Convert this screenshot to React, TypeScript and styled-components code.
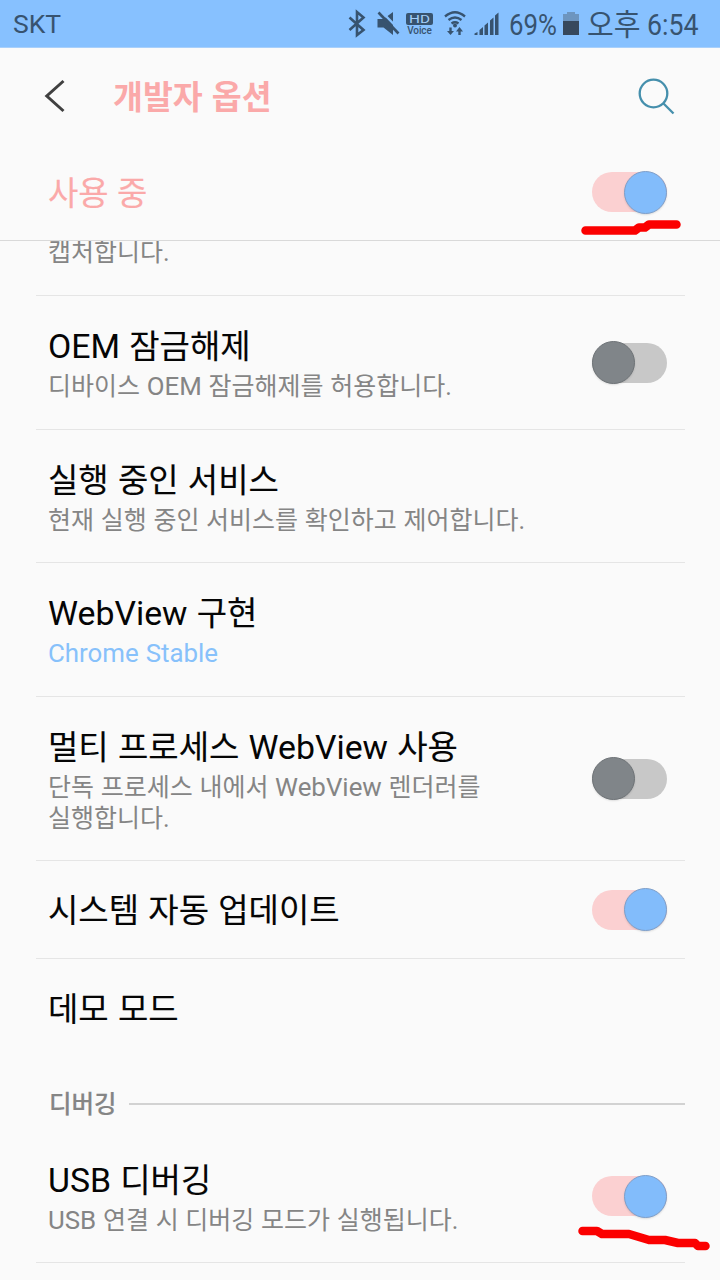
import React from 'react';
import styled, { createGlobalStyle } from 'styled-components';

const GlobalStyle = createGlobalStyle`
  * { box-sizing: border-box; }
  body {
    margin: 0;
    background: #fafafa;
    font-family: Roboto, "Noto Sans CJK KR", sans-serif;
    overflow: hidden;
  }
`;

const Screen = styled.div`
  position: relative;
  width: 720px;
  height: 1280px;
  overflow: hidden;
  background: #fafafa;
  display: flex;
  flex-direction: column;
  white-space: nowrap;
`;

const StatusBar = styled.header`
  height: 48px;
  flex: none;
  display: flex;
  align-items: center;
  padding: 0 13px 0 13px;
  background: #87c1ff;
  color: #37536f;
  border-bottom: 1px solid #a9d0fb;
`;

const Carrier = styled.span`
  flex: 1;
  font-size: 26.500px;
  line-height: 46px;
`;

const StatusIcons = styled.div`
  display: flex;
  align-items: center;
  height: 48px;
`;

const StatusText = styled.span<{ $width: number; $scale: number }>`
  width: ${(p) => p.$width}px;
  padding-top: 2px;
  font-size: 30px;
  line-height: 48px;
  transform: scaleX(${(p) => p.$scale});
  transform-origin: left center;
`;

const AppBar = styled.div`
  height: 96px;
  flex: none;
  display: flex;
  align-items: center;
  padding: 0 45px 0 44px;
`;

const PageTitle = styled.h1`
  flex: 1;
  margin: 4px 0 0 47px;
  font-size: 32.500px;
  line-height: 48px;
  font-weight: 700;
  word-spacing: 1px;
  color: #faa9a9;
`;

const MasterRow = styled.div`
  height: 97px;
  flex: none;
  display: flex;
  align-items: center;
  justify-content: space-between;
  padding: 0 53px 0 48px;
  border-bottom: 1px solid #d9d9d9;
`;

const MasterLabel = styled.span`
  margin-top: 4px;
  font-size: 33px;
  line-height: 48px;
  color: #faa9a9;
  -webkit-text-stroke: 0.15px currentColor;
`;

const List = styled.main`
  flex: 1;
  min-height: 0;
  overflow: hidden;
  padding: 0 35px 0 36px;
`;

const Row = styled.section<{ $height: number; $last?: boolean }>`
  height: ${(p) => p.$height}px;
  display: flex;
  align-items: center;
  justify-content: space-between;
  padding: 0 18px 0 12px;
  border-bottom: ${(p) => (p.$last ? 'none' : '1px solid #e5e5e5')};
`;

const RowText = styled.div`
  display: flex;
  flex-direction: column;
  gap: 2px;
  padding-top: 2px;
`;

const Latin = styled.span`
  font-size: 1.035em;
  line-height: 1;
  -webkit-text-stroke: 0;
`;

const RowTitle = styled.div`
  font-size: 33px;
  line-height: 44px;
  height: 44px;
  word-spacing: 1px;
  color: #050505;
  -webkit-text-stroke: 0.12px currentColor;
  ${Latin} { font-size: 1.025em; }
`;

const Summary = styled.div<{ $accent?: boolean }>`
  font-size: 25px;
  line-height: 31px;
  word-spacing: 0.5px;
  color: ${(p) => (p.$accent ? '#87c1fb' : '#858585')};
  white-space: pre-line;
`;

const ClippedRow = styled(Row)`
  align-items: flex-start;
  & > div { margin-top: -4px; }
`;

const Track = styled.span<{ $on: boolean }>`
  flex: none;
  width: 75px;
  height: 40px;
  border-radius: 20px;
  display: flex;
  align-items: center;
  justify-content: ${(p) => (p.$on ? 'flex-end' : 'flex-start')};
  background: ${(p) => (p.$on ? '#fbd0d1' : '#c8c8c8')};
`;

const Thumb = styled.span<{ $on: boolean }>`
  flex: none;
  width: 43px;
  height: 43px;
  border-radius: 50%;
  background: ${(p) => (p.$on ? '#82bcfb' : '#808589')};
  border: 1px solid ${(p) => (p.$on ? '#7f9fc9' : '#6e7377')};
  box-shadow: 0 1px 2px rgba(0, 0, 0, 0.12);
`;

const Category = styled.div`
  height: 72px;
  display: flex;
  align-items: center;
  gap: 12px;
  padding: 19px 0 0 13px;
  font-size: 24.500px;
  line-height: 32px;
  font-weight: 500;
  color: #858585;
  -webkit-text-stroke: 0.15px currentColor;
  &::after {
    content: '';
    flex: 1;
    height: 2px;
    background: #d2d2d2;
  }
`;

const CategoryLabel = styled.span`
  padding-top: 2px;
`;

const Scribble = styled.svg<{ $x: number; $y: number }>`
  position: absolute;
  left: ${(p) => p.$x}px;
  top: ${(p) => p.$y}px;
`;

const Toggle = ({ on }: { on: boolean }) => (
  <Track $on={on}><Thumb $on={on} /></Track>
);

/* Latin words are set slightly larger than the Hangul around them. */
const Mixed = ({ text }: { text: string }) => (
  <>
    {text.split(/([A-Za-z]+(?: [A-Za-z]+)*)/).map((part, i) =>
      i % 2 ? <Latin key={i}>{part}</Latin> : part,
    )}
  </>
);

const SystemIcons = () => (
  <svg width="169" height="48" viewBox="340 0 169 48" fill="none" stroke="#37536f">
    <path d="M349.500 17.500L363.500 30L357 35V12L363.500 17.500L349.500 30" strokeWidth="2.6" />
    <g fill="#37536f" stroke="none">
      <path d="M377.500 19h6l9.500-7v23l-9.500-7.500h-6z" />
      <rect x="406" y="13" width="27" height="12" rx="2" />
      <path d="M474.500 35v-1.500l3-1.500v3zM479.500 35v-5l3.500-3v8zM484.500 35v-9.500l3.500-3v12.500zM490 35v-14.500l3.500-3v17.500zM495 35v-19.500l3.500-3v22.500z" />
      <circle cx="455" cy="25.500" r="2" />
      <path d="M450.500 28l3.500 4h-2.300v3.500h-2.400v-3.500h-2.300z" transform="matrix(1 0 0 -1 0 63)" />
      <path d="M459.500 27l3.500 4.500h-2.300v3.500h-2.400v-3.500h-2.300z" />
    </g>
    <path d="M380.500 10.500L401 31.500" stroke="#87c1ff" strokeWidth="2.500" />
    <path d="M378.500 12.500L398.500 33.500" strokeWidth="2.600" />
    <path d="M445 16.500Q455 8 465 16.500M448.500 20Q455 15 461.500 20M451.500 23.500Q455 21 458.500 23.500" strokeWidth="2.300" />
    <text x="419.500" y="23.200" textAnchor="middle" fontSize="11.500" textLength="21" lengthAdjust="spacingAndGlyphs" fill="#a4cef8" stroke="none">HD</text>
    <text x="419.500" y="34" textAnchor="middle" fontSize="10" textLength="24.500" fontWeight="500" fill="#37536f" stroke="none">Voice</text>
  </svg>
);

const Battery = () => (
  <svg width="24" height="48" viewBox="0 0 24 48">
    <path d="M0 14h4v-2h8v2h4v8H0z" fill="#6d95bf" />
    <path d="M0 21h16v14H0z" fill="#37485c" />
  </svg>
);

interface Setting {
  title: string;
  summary?: string;
  accent?: boolean;
  on?: boolean;
  height: number;
  last?: boolean;
}

const settings: Setting[] = [
  { title: 'OEM 잠금해제', summary: '디바이스 OEM 잠금해제를 허용합니다.', on: false, height: 134 },
  { title: '실행 중인 서비스', summary: '현재 실행 중인 서비스를 확인하고 제어합니다.', height: 133 },
  { title: 'WebView 구현', summary: 'Chrome Stable', accent: true, height: 134 },
  { title: '멀티 프로세스 WebView 사용', summary: '단독 프로세스 내에서 WebView 렌더러를\n실행합니다.', on: false, height: 164 },
  { title: '시스템 자동 업데이트', on: true, height: 98 },
  { title: '데모 모드', height: 99, last: true },
];

const SettingRow = ({ title, summary, accent, on, height, last }: Setting) => (
  <Row $height={height} $last={last}>
    <RowText>
      <RowTitle><Mixed text={title} /></RowTitle>
      {summary && <Summary $accent={accent}><Mixed text={summary} /></Summary>}
    </RowText>
    {on !== undefined && <Toggle on={on} />}
  </Row>
);

export default function App() {
  return (
    <>
      <GlobalStyle />
      <Screen>
        <StatusBar>
          <Carrier>SKT</Carrier>
          <StatusIcons>
            <SystemIcons />
            <StatusText $width={54} $scale={0.86}>69%</StatusText>
            <Battery />
            <StatusText $width={60} $scale={0.97}>오후</StatusText>
            <StatusText $width={60} $scale={0.89}>6:54</StatusText>
          </StatusIcons>
        </StatusBar>
        <AppBar>
          <svg width="22" height="34" viewBox="0 0 22 34" fill="none" stroke="#404040" strokeWidth="3">
            <path d="M19.500 2L2.800 17L19.500 32" />
          </svg>
          <PageTitle>개발자 옵션</PageTitle>
          <svg width="38" height="38" viewBox="0 0 38 38" fill="none" stroke="#458fac" strokeWidth="2.300">
            <circle cx="16.500" cy="16.500" r="13.800" />
            <path d="M26.500 26.500L36.500 36.500" />
          </svg>
        </AppBar>
        <MasterRow>
          <MasterLabel>사용 중</MasterLabel>
          <Toggle on />
        </MasterRow>
        <List>
          <ClippedRow $height={55}>
            <Summary>캡처합니다.</Summary>
          </ClippedRow>
          {settings.map((s) => <SettingRow key={s.title} {...s} />)}
          <Category><CategoryLabel>디버깅</CategoryLabel></Category>
          <SettingRow title="USB 디버깅" summary="USB 연결 시 디버깅 모드가 실행됩니다." on height={133} />
        </List>
        <Scribble $x={576} $y={214} width="112" height="26" fill="none" stroke="#fb0000" strokeWidth="8.500" strokeLinecap="round" strokeLinejoin="round">
          <path d="M9.500 16.500H59L63 13.500H69L73 10.500H100.500" />
        </Scribble>
        <Scribble $x={574} $y={1222} width="142" height="32" fill="none" stroke="#fb0000" strokeWidth="8.500" strokeLinecap="round" strokeLinejoin="round">
          <path d="M8.500 9H23L28 12H55L75 18H91L104 21H121L124 24H131.500" />
        </Scribble>
      </Screen>
    </>
  );
}
